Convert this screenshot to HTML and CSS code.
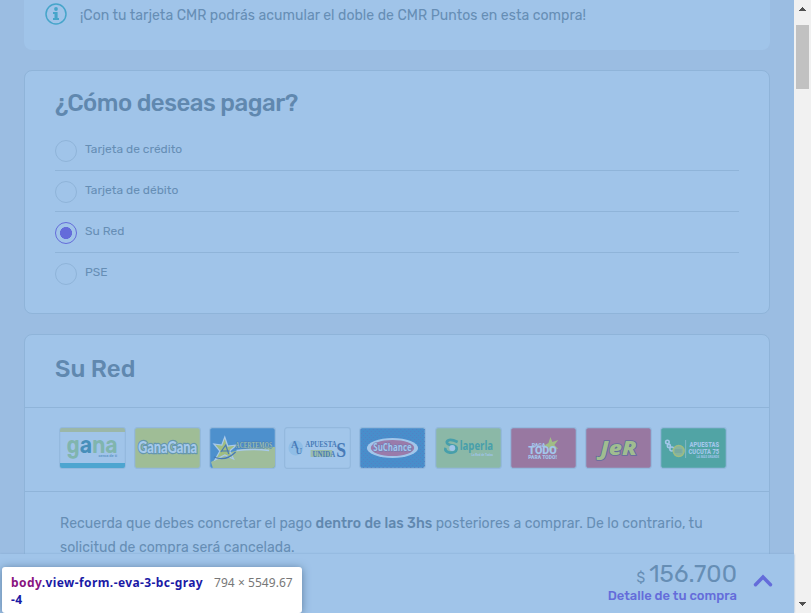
FILE: index.html
```html
<!DOCTYPE html>
<html lang="es">
<head>
<meta charset="utf-8">
<title>Checkout</title>
<link rel="stylesheet" href="styles.css">
</head>
<body>
<div class="window">
  <div class="page">
    <main class="content">
      <section class="notice">
        <svg class="info" viewBox="0 0 22 22"><circle cx="11" cy="11" r="10" fill="none" stroke="#46a5ca" stroke-width="1.5"/><circle cx="11" cy="6" r="1.9" fill="#46a5ca"/><path d="M8 9h4.6v6.1H14V17H8v-1.9h1.5v-4.2H8z" fill="#46a5ca"/></svg>
        <span class="notice-text">¡Con tu tarjeta CMR podrás acumular el doble de CMR Puntos en esta compra!</span>
      </section>

      <section class="card payment">
        <h2 class="title title-question">¿Cómo deseas pagar?</h2>
        <ul class="options">
          <li class="option"><i class="radio"></i><span class="label">Tarjeta de crédito</span></li>
          <li class="option"><i class="radio"></i><span class="label">Tarjeta de débito</span></li>
          <li class="option"><i class="radio selected"></i><span class="label">Su Red</span></li>
          <li class="option"><i class="radio"></i><span class="label">PSE</span></li>
        </ul>
      </section>

      <section class="card network">
        <div class="network-head"><h2 class="title">Su Red</h2></div>
        <div class="brands">
          <svg class="brand" viewBox="0 0 68 42" preserveAspectRatio="none"><rect class="frame" x=".7" y=".7" width="66.6" height="40.6" rx="2.5" fill="#a0c4e9"/><path d="M1 5V3q0-2 2-2h62q2 0 2 2v2z" fill="#9bb7a8"/><path d="M1 36h66v3q0 2-2 2H3q-2 0-2-2z" fill="#4da5d0"/><text class="gana" x="7.5" y="26" textLength="52" lengthAdjust="spacingAndGlyphs">g<tspan fill="#478fb9">a</tspan>na</text><text class="tiny" x="40" y="30.5" textLength="19" lengthAdjust="spacingAndGlyphs" fill="#6598c7">cerca de ti</text></svg>
          <svg class="brand" viewBox="0 0 68 42" preserveAspectRatio="none"><rect class="frame" x=".7" y=".7" width="66.6" height="40.6" rx="2.5" fill="#9fbd96"/><text class="ganagana" x="4" y="26" textLength="60" lengthAdjust="spacingAndGlyphs">GanaGana</text></svg>
          <svg class="brand" viewBox="0 0 68 42" preserveAspectRatio="none"><rect class="frame" x=".7" y=".7" width="66.6" height="40.6" rx="2.5" fill="#4d90cd"/><path d="M2 35Q30 17 67 20v18q0 3-3 3H4z" fill="#9fbd9b"/><path d="M16 10l3 9 9-1-7 6 4 8-9-4-10 5 5-9-6-7 8 1z" fill="#9fbd82" stroke="#a9c9eb" stroke-width="1.2"/><path d="M5 30Q17 35 27 25M12 25l5-7 3 9M13 24h8" fill="none" stroke="#4779b4" stroke-width="1.2"/><text class="acertemos" x="27" y="21" textLength="37" lengthAdjust="spacingAndGlyphs">ACERTEMOS</text><path d="M28 23.5q18-2 33 0" stroke="#a8caeb" stroke-width="1.3" fill="none"/></svg>
          <svg class="brand" viewBox="0 0 68 42" preserveAspectRatio="none"><rect class="frame" x=".7" y=".7" width="66.6" height="40.6" rx="2.5" fill="#a2c6ea"/><circle cx="12" cy="21" r="7.5" fill="#8fbde6"/><g class="unidas"><text x="7" y="21" font-size="10">A</text><text x="12" y="27.5" font-size="9">U</text><text x="21.5" y="20.5" textLength="32" lengthAdjust="spacingAndGlyphs" font-size="8">APUESTA</text><path d="M27 23h22v7H27z" fill="#9bbdab"/><text x="29" y="30" textLength="23" lengthAdjust="spacingAndGlyphs" font-size="9">UNIDA</text><text x="53" y="30" font-size="22" textLength="10" lengthAdjust="spacingAndGlyphs">S</text></g></svg>
          <svg class="brand" viewBox="0 0 68 42" preserveAspectRatio="none"><defs><pattern id="dots" width="4" height="4" patternUnits="userSpaceOnUse"><path d="M0 0h1v1H0zM2 2h1v1H2z" fill="#557fc3"/></pattern></defs><rect class="frame" x=".7" y=".7" width="66.6" height="40.6" rx="2.5" fill="#488ecb"/><rect x="1" y="1" width="66" height="40" rx="2" fill="url(#dots)"/><ellipse cx="34" cy="21" rx="26" ry="10" fill="#a2c6ea"/><ellipse cx="34" cy="21" rx="22" ry="8" fill="#9a7baa"/><text class="suchance" x="14.5" y="24.5" textLength="39" lengthAdjust="spacingAndGlyphs">SuChance</text></svg>
          <svg class="brand" viewBox="0 0 68 42" preserveAspectRatio="none"><rect class="frame" x=".7" y=".7" width="66.6" height="40.6" rx="2.5" fill="#8bb8a7"/><path d="M23 15q-9-4-11 0c0 5 11 2 10 7-1 6-14 4-11-1" fill="none" stroke="#479fab" stroke-width="2.8"/><circle cx="17.5" cy="21" r="3" fill="#a0c4e9"/><text class="perla" x="25" y="23.5" textLength="34" lengthAdjust="spacingAndGlyphs">laperla</text><text class="tiny" x="37" y="29" textLength="22" lengthAdjust="spacingAndGlyphs" fill="#a0c4e9">La Red de Todos</text></svg>
          <svg class="brand" viewBox="0 0 68 42" preserveAspectRatio="none"><rect class="frame" x=".7" y=".7" width="66.6" height="40.6" rx="2.5" fill="#9878a1"/><path d="M41 10l2 5 6-2-4 5 4 4-6-1-2 5-2-6-5-1 5-3z" fill="#a1bd85"/><g class="todo"><text x="22" y="20" textLength="14" lengthAdjust="spacingAndGlyphs" font-size="5">PAGA</text><text x="18.5" y="27.5" textLength="29" lengthAdjust="spacingAndGlyphs" font-size="10">TODO</text><text x="18.5" y="32" textLength="29" lengthAdjust="spacingAndGlyphs" font-size="4.5">PARA TODO!</text></g></svg>
          <svg class="brand" viewBox="0 0 68 42" preserveAspectRatio="none"><rect class="frame" x=".7" y=".7" width="66.6" height="40.6" rx="2.5" fill="#9878a1"/><text class="jer" x="15.5" y="28.5" textLength="37" lengthAdjust="spacingAndGlyphs">JeR</text></svg>
          <svg class="brand" viewBox="0 0 68 42" preserveAspectRatio="none"><rect class="frame" x=".7" y=".7" width="66.6" height="40.6" rx="2.5" fill="#51a4a5"/><g fill="none" stroke="#a2c6ea" stroke-width="1.6"><circle cx="7.5" cy="15" r="1.8"/><circle cx="9" cy="19" r="1.6"/><circle cx="12" cy="22" r="2"/></g><circle cx="19" cy="24" r="5.5" fill="#86b3a0" stroke="#9fbc81" stroke-width="1.5"/><path d="M15 22h7v4h-7z" fill="#79aaa0"/><path d="M26 13v18" stroke="#82b8c6"/><g class="cucuta"><text x="30" y="20.5" textLength="30" lengthAdjust="spacingAndGlyphs" font-size="7.5">APUESTAS</text><text x="29" y="27.5" textLength="31" lengthAdjust="spacingAndGlyphs" font-size="8">CUCUTA 75</text></g><text class="tiny" x="37" y="31" textLength="23" lengthAdjust="spacingAndGlyphs" fill="#a0c4e9">LA MÁS GRANDE</text></svg>
        </div>
        <p class="reminder">Recuerda que debes concretar el pago <b>dentro de las 3hs</b> posteriores a comprar. De lo contrario, tu<br>solicitud de compra será cancelada.</p>
      </section>
    </main>
    <footer class="summary">
      <div class="totals">
        <div class="price"><span class="currency">$</span><span class="amount">156.700</span></div>
        <a class="detail">Detalle de tu compra</a>
      </div>
      <svg class="chevron" viewBox="0 0 20 14"><path d="M2.5 10.8 10 3l7.5 7.8" fill="none" stroke="#646cda" stroke-width="3.4" stroke-linecap="round"/></svg>
    </footer>
    <div class="tooltip"><div class="selector"><span class="tag">body</span>.view-form.-eva-3-bc-gray<br>-4</div><span class="dims">794 × 5549.67</span></div>
  </div>
  <div class="scrollbar">
    <svg class="arrow" viewBox="0 0 17 17" shape-rendering="crispEdges"><path d="M8 7h1v1h1v1h1v1h1v1H5v-1h1V9h1V8h1z" fill="#505050"/></svg>
    <div class="track"><div class="thumb"></div></div>
    <svg class="arrow" viewBox="0 0 17 17" shape-rendering="crispEdges"><path d="M5 6h7v1h-1v1h-1v1H9v1H8V9H7V8H6V7H5z" fill="#505050"/></svg>
  </div>
</div>
</body>
</html>
```

FILE: styles.css
```css
* { box-sizing: border-box; }
body { margin: 0; overflow: hidden; font-family: Rubik, Roboto, sans-serif; font-weight: 400; color: #668eb5; }
.window { display: flex; width: 811px; height: 613px; overflow: hidden; }
.page { position: relative; display: flex; flex-direction: column; width: 794px; height: 613px; background: #9bbde2; }
.content { height: 554px; padding: 0 24px; overflow: hidden; display: flex; flex-direction: column; gap: 20px; }
.notice { display: flex; flex: none; align-items: flex-start; gap: 13px; height: 50px; padding: 3px 21px 0; background: #a0c4e9; border-radius: 0 0 8px 8px; }
.info { width: 22px; height: 22px; }
.notice-text { font-size: 14px; line-height: 26px; letter-spacing: .05px; white-space: nowrap; }
.card { flex: none; background: #a0c4e9; border: 1px solid #8fb4d9; border-radius: 8px; }
.payment { height: 244px; padding: 16px 30px 0; }
.title { margin: 0; font-size: 24px; line-height: 32px; font-weight: 500; color: #6088af; white-space: nowrap; }
.title-question { letter-spacing: -.5px; }
.options { list-style: none; margin: 11px 0 0; padding: 0; }
.option { display: flex; gap: 8px; height: 41px; padding-top: 10px; border-bottom: 1px solid #8fb4d9; }
.option:last-child { border-bottom: 0; }
.radio { width: 22px; height: 22px; border: 1px solid #8fb4d9; border-radius: 50%; }
.radio.selected { border-color: #646cda; background: radial-gradient(circle, #646cda 5.7px, transparent 6.3px); }
.label { font-size: 12px; line-height: 18px; }
.network { height: 300px; }
.network-head { height: 73px; padding: 18px 30px 0; border-bottom: 1px solid #8fb4d9; }
.brands { display: flex; gap: 8.15px; height: 84px; padding: 19px 33px 0 33.8px; border-bottom: 1px solid #8fb4d9; }
.brand { flex: none; width: 67px; height: 42px; font-family: Roboto, sans-serif; font-weight: 700; }
.frame { stroke: #93b8dd; stroke-width: 1.2; }
.gana { font: 600 25px Rubik, Lato, sans-serif; fill: #80b5ae; }
.tiny { font-size: 4px; }
.ganagana { font: 900 16px Lato, sans-serif; fill: #a6caec; stroke: #6597af; stroke-width: 2.4px; paint-order: stroke; }
.acertemos { font: 900 9px "Liberation Serif", serif; fill: #9bbdad; stroke: #497eb8; stroke-width: 1px; paint-order: stroke; }
.unidas { font-family: "Liberation Serif", serif; fill: #487bb8; }
.suchance { font: 700 10px "Open Sans", sans-serif; fill: #a3c6eb; stroke: #6c78b0; stroke-width: 1px; paint-order: stroke; }
.perla { font: 700 12px "Open Sans", sans-serif; fill: #479fab; }
.todo { fill: #a3c6eb; font-weight: 900; }
.jer { font: italic 800 20px "Open Sans", sans-serif; fill: #a0bd90; stroke: #626c9d; stroke-width: 1.6px; paint-order: stroke; }
.cucuta { fill: #a3c6eb; font-weight: 900; }
.reminder { margin: 0; padding: 20px 35px 0; font-size: 14px; line-height: 24px; letter-spacing: .05px; white-space: nowrap; }
.reminder b { font-weight: 500; color: #6088af; }
.summary { position: relative; display: flex; flex: none; justify-content: flex-end; gap: 16px; height: 59px; padding: 5px 21px 0 0; background: #a0c4e9; box-shadow: 0 0 2px #83a9cf; }
.totals { display: flex; flex-direction: column; align-items: flex-end; }
.price { display: flex; align-items: baseline; gap: 4px; height: 28px; line-height: 30px; }
.currency { font-size: 14px; }
.amount { font-size: 24px; letter-spacing: .1px; }
.detail { color: #646cda; font-size: 13px; line-height: 18px; font-weight: 500; }
.chevron { width: 20px; height: 14px; margin-top: 15px; }
.tooltip { position: absolute; left: 2px; top: 567px; display: flex; gap: 11px; width: 300px; height: 46px; padding: 7px 9px 0; border-radius: 3px; background: #fff; font: 12px/17px "Noto Sans", sans-serif; white-space: nowrap; box-shadow: 0 1px 8px #5c7d9f; }
.selector { width: 192px; font-weight: 700; color: #1a1aa6; letter-spacing: .41px; }
.tag { color: #881280; }
.dims { color: #777; letter-spacing: .05px; }
.scrollbar { display: flex; flex-direction: column; width: 17px; background: #f1f1f1; }
.arrow { display: block; width: 17px; height: 17px; }
.track { flex: 1; padding: 8px 2px 0; }
.thumb { height: 64px; background: #c1c1c1; }
```
